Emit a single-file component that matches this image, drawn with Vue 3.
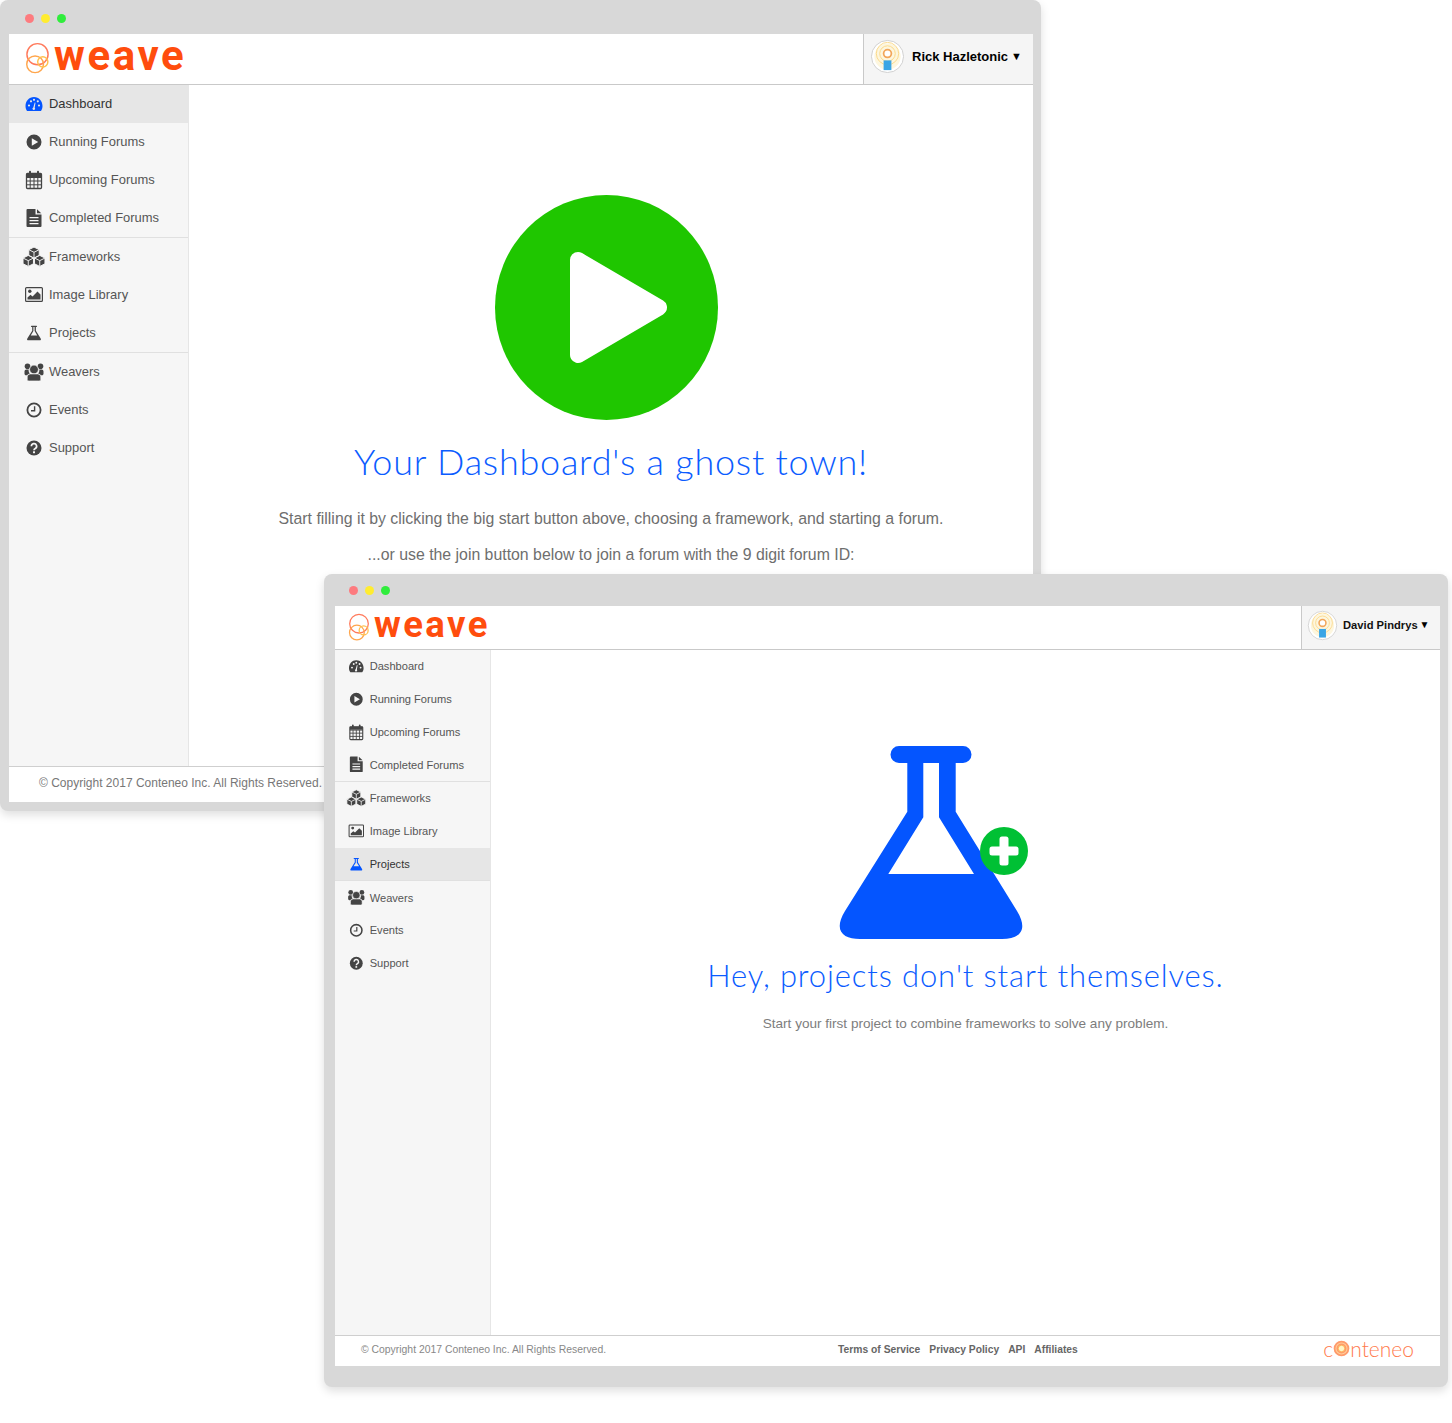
<script setup>
const navGroups = [
  [
    { id: 'dash', label: 'Dashboard' },
    { id: 'play', label: 'Running Forums' },
    { id: 'cal', label: 'Upcoming Forums' },
    { id: 'file', label: 'Completed Forums' }
  ],
  [
    { id: 'cubes', label: 'Frameworks' },
    { id: 'pic', label: 'Image Library' },
    { id: 'flask', label: 'Projects' }
  ],
  [
    { id: 'users', label: 'Weavers' },
    { id: 'clock', label: 'Events' },
    { id: 'help', label: 'Support' }
  ]
]
const windows = [
  { key: 'first', user: 'Rick Hazletonic', active: 'Dashboard' },
  { key: 'second', user: 'David Pindrys', active: 'Projects' }
]
const flaskPath = 'M60 0H124a8.5 8.5 0 0 1 0 17H116.7V65.7L178 165C190 185 180 193 163 193H21C4 193-6 185 6 165L68.3 65.7V17H60a8.5 8.5 0 0 1 0-17zM84.3 17V71.3L49.3 128H135L100 71.3V17z'
</script>

<template>
  <div class="canvas">
    <svg class="defs" width="0" height="0" aria-hidden="true">
      <symbol id="dash" viewBox="0 0 24 24">
        <path fill="currentColor" fill-rule="evenodd" d="M12 5C7 5 3.5 9 3.5 14c0 1.900.5 3.400 1.200 4.400.3.400.6.600 1 .6h12.600c.4 0 .7-.2 1-.6.7-1 1.200-2.500 1.200-4.400C20.500 9 17 5 12 5zM5.900 13.500a1.100 1.100 0 1 0 2.200 0a1.100 1.100 0 1 0-2.200 0zM7.900 9.300a1.100 1.100 0 1 0 2.200 0a1.100 1.100 0 1 0-2.200 0zM10.900 7.800a1.100 1.100 0 1 0 2.200 0a1.100 1.100 0 1 0-2.200 0zM14.700 9.300a1.100 1.100 0 1 0 2.200 0a1.100 1.100 0 1 0-2.200 0zM15.900 13.500a1.100 1.100 0 1 0 2.200 0a1.100 1.100 0 1 0-2.200 0zM11.300 15.500L12.700 10.500L13.500 10.700L12.700 15.800a1.300 1.300 0 1 1-1.400-.3z" />
      </symbol>
      <symbol id="play" viewBox="0 0 24 24">
        <path fill="currentColor" fill-rule="evenodd" d="M4.500 12a7.500 7.500 0 1 0 15 0a7.500 7.500 0 1 0-15 0zM9.800 8.200L16.200 12L9.800 15.800z" />
      </symbol>
      <symbol id="cal" viewBox="0 0 24 24">
        <g fill="none" stroke="currentColor">
          <rect x="4.500" y="5.500" width="15" height="15" rx="1" stroke-width="1.300" />
          <path stroke-width="1" d="M4.500 9.500H19.500M4.500 13H19.500M4.500 16.800H19.500M8.200 9.500V20.500M12 9.500V20.500M15.800 9.500V20.500" />
          <path stroke-width="2" stroke-linecap="round" d="M8 3.800V6.500M16 3.800V6.500" />
        </g>
        <rect x="4.500" y="5.500" width="15" height="3.500" fill="currentColor" />
      </symbol>
      <symbol id="file" viewBox="0 0 24 24">
        <path fill="currentColor" fill-rule="evenodd" d="M5.500 3H13.500V8.500H19.500V20a1 1 0 0 1-1 1H5.500a1 1 0 0 1-1-1V4a1 1 0 0 1 1-1zM7.500 11V12.300H16.500V11zM7.500 14V15.300H16.500V14zM7.500 17V18.300H16.500V17z" />
        <path fill="currentColor" d="M15 3.200L19.300 7.200H15z" />
      </symbol>
      <symbol id="cubes" viewBox="0.500 0.500 23 23">
        <g fill="currentColor" stroke="#f6f6f6" stroke-width=".9" stroke-linejoin="round">
          <path d="M12 2.500L17 5V10.500L12 13L7 10.500V5z" />
          <path d="M7 5L12 7.500L17 5M12 7.500V13" fill="none" />
          <path d="M6.500 10.500L11.500 13V18.500L6.500 21L1.500 18.500V13z" />
          <path d="M1.500 13L6.500 15.500L11.500 13M6.500 15.500V21" fill="none" />
          <path d="M17.500 10.500L22.500 13V18.500L17.500 21L12.500 18.500V13z" />
          <path d="M12.500 13L17.500 15.500L22.500 13M17.500 15.500V21" fill="none" />
        </g>
      </symbol>
      <symbol id="pic" viewBox="0 0 24 24">
        <rect x="3.600" y="4.600" width="16.800" height="13.800" rx="1" fill="none" stroke="currentColor" stroke-width="1.200" />
        <circle cx="7.800" cy="8.300" r="1.700" fill="currentColor" />
        <path fill="currentColor" d="M5.500 16.500V14.500L8.500 11.800L10.500 13.500L15.500 8.500L18.500 11.500V16.500z" />
      </symbol>
      <symbol id="flask" viewBox="-65.500 -61 315 315">
        <path fill="currentColor" fill-rule="evenodd" :d="flaskPath" />
      </symbol>
      <symbol id="users" viewBox="0 0 24 24">
        <g fill="currentColor">
          <circle cx="5.500" cy="6.300" r="2.800" />
          <circle cx="18.500" cy="6.300" r="2.800" />
          <path d="M2.500 11.500c0-1.200.8-2 2-2h2.200c-.3 1.500.2 3 1.300 4-1.200.3-2.200 1-2.900 1.800H4c-.9 0-1.500-.6-1.500-1.500z" />
          <path d="M21.500 11.500c0-1.200-.8-2-2-2h-2.200c.3 1.500-.2 3-1.300 4 1.200.3 2.200 1 2.900 1.800H20c.9 0 1.500-.6 1.500-1.500z" />
          <g stroke="#f6f6f6" stroke-width=".7">
            <circle cx="12" cy="9.500" r="4.400" />
            <path d="M5.200 16.800a3 3 0 0 1 3-2.900h7.600a3 3 0 0 1 3 2.900v2.600c0 1-1 1.600-2 1.600H7.200c-1 0-2-.6-2-1.600z" />
          </g>
        </g>
      </symbol>
      <symbol id="clock" viewBox="0 0 24 24">
        <circle cx="12" cy="12" r="6.600" fill="none" stroke="currentColor" stroke-width="1.800" />
        <path d="M12.600 8.200V12.800H9" fill="none" stroke="currentColor" stroke-width="1.400" />
      </symbol>
      <symbol id="help" viewBox="0 0 24 24">
        <circle cx="12" cy="12" r="7.500" fill="currentColor" />
        <path d="M9.400 10.200a2.600 2.600 0 1 1 3.900 2.200c-.9.500-1.300 1-1.300 1.800" fill="none" stroke="#f6f6f6" stroke-width="1.700" />
        <rect x="11" y="15.300" width="2" height="1.900" fill="#f6f6f6" />
      </symbol>
    </svg>

    <section v-for="win in windows" :key="win.key" class="window" :class="win.key">
      <div class="titlebar">
        <i class="dot red"></i><i class="dot yellow"></i><i class="dot green"></i>
      </div>
      <header class="topbar">
        <div class="logo">
          <svg class="logo-mark" viewBox="0 0 26 34" aria-hidden="true">
            <g fill="none">
              <circle cx="13" cy="12.500" r="11" stroke="#ff7a5c" stroke-width="1.500" />
              <circle cx="10.500" cy="23" r="8.700" stroke="#ffa64d" stroke-width="1.500" />
              <circle cx="18.500" cy="20.500" r="5.300" stroke="#ffc04d" stroke-width="1.500" />
            </g>
          </svg>
          <span class="logo-word">weave</span>
        </div>
        <div class="user">
          <svg class="avatar" viewBox="0 0 36 36" aria-hidden="true">
            <circle cx="18" cy="18" r="16.500" fill="#fff" stroke="#d0d0d0" stroke-width="1" />
            <circle cx="18" cy="18" r="13.500" fill="#fdf6de" />
            <g fill="none" stroke="#fbd98a" stroke-width="1">
              <circle cx="18" cy="15" r="11.500" />
              <circle cx="18" cy="15" r="8" />
            </g>
            <circle cx="18" cy="15" r="4" fill="#fff" stroke="#f2a65a" stroke-width="1.800" />
            <rect x="14" y="22" width="8" height="10" fill="#3aa5e5" />
          </svg>
          <span class="user-name">{{ win.user }}</span>
          <span class="caret">▼</span>
        </div>
      </header>

      <div class="middle">
        <nav class="sidebar">
          <ul v-for="(group, g) in navGroups" :key="g" class="nav-group">
            <li
              v-for="item in group"
              :key="item.id"
              class="nav-item"
              :class="{ active: item.label === win.active }"
            >
              <svg class="nav-icon" aria-hidden="true"><use :href="'#' + item.id" /></svg>
              <span class="nav-label">{{ item.label }}</span>
            </li>
          </ul>
        </nav>

        <main v-if="win.key === 'first'" class="content content-first">
          <svg class="start-button" viewBox="0 0 223 225" aria-hidden="true">
            <ellipse cx="111.500" cy="112.500" rx="111.500" ry="112.500" fill="#1fc600" />
            <path d="M83 65L164 112.500L83 160z" fill="#fff" stroke="#fff" stroke-width="16" stroke-linejoin="round" />
          </svg>
          <h1 class="headline">Your Dashboard's a ghost town!</h1>
          <p class="lead">Start filling it by clicking the big start button above, choosing a framework, and starting a forum.</p>
          <p class="lead second-line">...or use the join button below to join a forum with the 9 digit forum ID:</p>
        </main>

        <main v-else class="content content-second">
          <svg class="big-flask" viewBox="0 0 190 193" aria-hidden="true">
            <path fill="#0455ff" fill-rule="evenodd" :d="flaskPath" />
            <circle cx="165" cy="105" r="24" fill="#00c034" />
            <rect x="160.500" y="90.500" width="9" height="29" rx="2.500" fill="#fff" />
            <rect x="150.500" y="100.500" width="29" height="9" rx="2.500" fill="#fff" />
          </svg>
          <h1 class="headline">Hey, projects don't start themselves.</h1>
          <p class="lead">Start your first project to combine frameworks to solve any problem.</p>
        </main>
      </div>

      <footer class="footer">
        <span class="copyright">© Copyright 2017 Conteneo Inc. All Rights Reserved.</span>
        <template v-if="win.key === 'second'">
          <div class="links">
            <a>Terms of Service</a><a>Privacy Policy</a><a>API</a><a>Affiliates</a>
          </div>
          <div class="conteneo">
            <span>c</span>
            <svg class="conteneo-mark" viewBox="0 0 20 20" aria-hidden="true">
              <circle cx="10" cy="10" r="9.200" fill="#ff9a6b" />
              <circle cx="10" cy="10" r="6.500" fill="none" stroke="#ffd29a" stroke-width="1.200" />
              <circle cx="10" cy="10" r="3.800" fill="#fff6c8" stroke="#ffb04d" stroke-width="1" />
            </svg>
            <span>nteneo</span>
          </div>
        </template>
      </footer>
    </section>
  </div>
</template>

<style>
html, body { background: #fff; }
</style>

<style scoped>
.canvas {
  position: relative;
  width: 1452px;
  height: 1423px;
  overflow: hidden;
  font-family: "Liberation Sans", Arial, sans-serif;
}
.defs { position: absolute; }

.window {
  position: absolute;
  display: flex;
  flex-direction: column;
  box-sizing: border-box;
  background: #d8d8d8;
  border-radius: 8px;
  box-shadow: 0 4px 10px rgba(0, 0, 0, .13);
}
.first {
  left: 0; top: 0; width: 1041px; height: 811px;
  padding: 0 8px 9px 9px;
  --bar: 34px; --top: 50px; --side: 179px;
  --row: 38px; --nav: 12.950px; --ico: 24px; --ico-left: 12.500px; --ico-gap: 3.500px;
  --dot-left: 15.500px;
  --label-lift: 2px;
}
.second {
  left: 324px; top: 574px; width: 1124px; height: 813px;
  padding: 0 8px 21px 11px;
  --bar: 32px; --top: 43px; --side: 155px;
  --row: 32.750px; --nav: 11.100px; --ico: 20.600px; --ico-left: 11px; --ico-gap: 3.100px;
  --dot-left: 13.500px;
  --label-lift: 0px;
}

.titlebar {
  flex: none;
  height: var(--bar);
  display: flex;
  align-items: center;
  gap: 7.400px;
  padding-left: var(--dot-left);
  margin-top: 1px;
}
.second .titlebar { margin-top: 0; }
.dot { width: 9px; height: 9px; border-radius: 50%; }
.red { background: #fd7b7f; }
.yellow { background: #ffec30; }
.green { background: #30ed3c; }

.topbar {
  flex: none;
  height: var(--top);
  display: flex;
  justify-content: space-between;
  background: #fff;
  border-bottom: 1px solid #c9c9c9;
  margin-top: -1px;
}
.second .topbar { margin-top: 0; }
.logo { display: flex; align-items: center; }
.first .logo { padding-left: 16px; }
.second .logo { padding-left: 13px; }
.logo-mark { display: block; flex: none; }
.first .logo-mark { width: 25px; height: 33px; margin-top: -1px; }
.second .logo-mark { width: 22px; height: 29px; margin-top: 0; }
.logo-word {
  font-family: Roboto, "Liberation Sans", sans-serif;
  font-weight: 700;
  color: #ff4d0d;
  line-height: 1;
}
.first .logo-word { font-size: 42px; letter-spacing: 2.600px; margin: -6px 0 0 4px; }
.second .logo-word { font-size: 36.500px; letter-spacing: 2.400px; margin: -4px 0 0 4px; }

.user {
  display: flex;
  align-items: center;
  box-sizing: border-box;
  background: #f5f5f5;
  border-left: 1px solid #c9c9c9;
  color: #000;
  font-weight: 700;
  padding-bottom: 5px;
}
.first .user { width: 170px; padding-left: 6px; font-size: 13px; }
.second .user { width: 139px; padding-left: 5px; font-size: 11.200px; }
.avatar { display: block; flex: none; }
.first .avatar { width: 35px; height: 35px; }
.second .avatar { width: 31px; height: 31px; }
.first .user-name { margin-left: 7px; }
.second .user-name { margin-left: 5px; color: #111; }
.caret { font-size: 11px; line-height: 1; }
.first .caret { margin-left: 3px; }
.second .caret { margin-left: 2px; font-size: 10px; }

.middle { flex: 1; display: flex; min-height: 0; background: #fff; }
.sidebar {
  flex: none;
  width: var(--side);
  background: #f6f6f6;
  border-right: 1px solid #e6e6e6;
}
.nav-group { list-style: none; margin: 0; padding: 0; border-bottom: 1px solid #e0e0e0; }
.nav-group:last-child { border-bottom: 0; }
.nav-item {
  height: var(--row);
  display: flex;
  align-items: center;
  padding-left: var(--ico-left);
  font-size: var(--nav);
  color: #555;
}
.nav-label { margin-bottom: var(--label-lift); }
.nav-item.active { background: #e6e6e6; color: #333; }
.nav-icon {
  flex: none;
  width: var(--ico);
  height: var(--ico);
  margin-right: var(--ico-gap);
  color: #444;
}
.nav-item.active .nav-icon { color: #0455ff; }

.content {
  flex: 1;
  min-width: 0;
  display: flex;
  flex-direction: column;
  align-items: center;
}
.content-first { padding-top: 110px; }
.content-second { padding-top: 96px; }
.start-button { display: block; width: 223px; height: 225px; margin-right: 10px; }
.big-flask { display: block; width: 190px; height: 193px; margin-right: 64px; }
.headline {
  margin: 0;
  font-family: Lato, "Open Sans", sans-serif;
  font-weight: 300;
  color: #0b5cff;
  white-space: nowrap;
  line-height: 1;
}
.content-first .headline { font-size: 36px; margin-top: 23px; letter-spacing: .770px; }
.content-second .headline { font-size: 31px; margin-top: 21px; letter-spacing: .860px; }
.lead { margin: 0; color: #6e6e6e; white-space: nowrap; }
.content-first .lead { font-size: 15.850px; margin-top: 31px; }
.content-first .second-line { margin-top: 18px; }
.content-second .lead { font-size: 13.570px; color: #7d7d7d; margin-top: 25px; }

.footer {
  flex: none;
  box-sizing: border-box;
  display: flex;
  align-items: center;
  background: #fff;
  border-top: 1px solid #cfcfcf;
  white-space: nowrap;
  padding-bottom: 4px;
}
.first .footer { height: 36px; padding-left: 30px; font-size: 12px; color: #777; }
.second .footer { height: 31px; padding-left: 26px; padding-right: 26px; font-size: 10.400px; color: #888; }
.links { display: flex; gap: 9px; margin-left: 232px; font-size: 10.300px; font-weight: 700; color: #666; }
.conteneo {
  margin-left: auto;
  margin-top: -1px;
  display: flex;
  align-items: center;
  font-family: Lato, sans-serif;
  font-weight: 300;
  font-size: 21px;
  color: #ff7a4d;
}
.conteneo-mark { display: block; width: 17px; height: 17px; }
</style>
